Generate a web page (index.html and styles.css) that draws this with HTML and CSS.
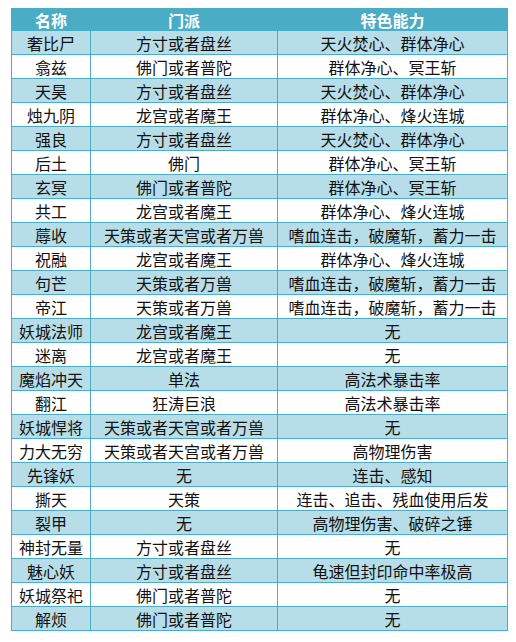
FILE: index.html
```html
<!DOCTYPE html>
<html lang="zh">
<head>
<meta charset="utf-8">
<link rel="stylesheet" href="styles.css">
</head>
<body>
<table class="grid">
<colgroup><col class="c1"><col class="c2"><col class="c3"></colgroup>
<thead>
<tr class="head"><th>名称</th><th>门派</th><th>特色能力</th></tr>
</thead>
<tbody>
<tr><td>奢比尸</td><td>方寸或者盘丝</td><td>天火焚心、群体净心</td></tr>
<tr><td>翕兹</td><td>佛门或者普陀</td><td>群体净心、冥王斩</td></tr>
<tr><td>天昊</td><td>方寸或者盘丝</td><td>天火焚心、群体净心</td></tr>
<tr><td>烛九阴</td><td>龙宫或者魔王</td><td>群体净心、烽火连城</td></tr>
<tr><td>强良</td><td>方寸或者盘丝</td><td>天火焚心、群体净心</td></tr>
<tr><td>后土</td><td>佛门</td><td>群体净心、冥王斩</td></tr>
<tr><td>玄冥</td><td>佛门或者普陀</td><td>群体净心、冥王斩</td></tr>
<tr><td>共工</td><td>龙宫或者魔王</td><td>群体净心、烽火连城</td></tr>
<tr><td>蓐收</td><td>天策或者天宫或者万兽</td><td>嗜血连击，破魔斩，蓄力一击</td></tr>
<tr><td>祝融</td><td>龙宫或者魔王</td><td>群体净心、烽火连城</td></tr>
<tr><td>句芒</td><td>天策或者万兽</td><td>嗜血连击，破魔斩，蓄力一击</td></tr>
<tr><td>帝江</td><td>天策或者万兽</td><td>嗜血连击，破魔斩，蓄力一击</td></tr>
<tr><td>妖城法师</td><td>龙宫或者魔王</td><td>无</td></tr>
<tr><td>迷离</td><td>龙宫或者魔王</td><td>无</td></tr>
<tr><td>魔焰冲天</td><td>单法</td><td>高法术暴击率</td></tr>
<tr><td>翻江</td><td>狂涛巨浪</td><td>高法术暴击率</td></tr>
<tr><td>妖城悍将</td><td>天策或者天宫或者万兽</td><td>无</td></tr>
<tr><td>力大无穷</td><td>天策或者天宫或者万兽</td><td>高物理伤害</td></tr>
<tr><td>先锋妖</td><td>无</td><td>连击、感知</td></tr>
<tr><td>撕天</td><td>天策</td><td>连击、追击、残血使用后发</td></tr>
<tr><td>裂甲</td><td>无</td><td>高物理伤害、破碎之锤</td></tr>
<tr><td>神封无量</td><td>方寸或者盘丝</td><td>无</td></tr>
<tr><td>魅心妖</td><td>方寸或者盘丝</td><td>龟速但封印命中率极高</td></tr>
<tr><td>妖城祭祀</td><td>佛门或者普陀</td><td>无</td></tr>
<tr><td>解烦</td><td>佛门或者普陀</td><td>无</td></tr>
</tbody>
</table>
</body>
</html>
```
FILE: styles.css
```css
html, body {
  margin: 0;
  padding: 0;
  background: #ffffff;
}
body {
  padding: 8px 0 0 11px;
  font-family: "Noto Sans CJK SC", "Noto Sans", sans-serif;
}
.grid {
  border-collapse: collapse;
  table-layout: fixed;
  width: 496px;
}
.c1 { width: 79px; }
.c2 { width: 187px; }
.c3 { width: 230px; }
.grid th, .grid td {
  border: 1px solid #4bacc6;
  padding: 0;
  text-align: center;
  vertical-align: middle;
  white-space: nowrap;
  overflow: hidden;
}
.grid th {
  background: #4bacc6;
  color: #ffffff;
  font-weight: bold;
  font-size: 16px;
  height: 21px;
  line-height: 20px;
}
.grid td {
  color: #111111;
  font-size: 16px;
  height: 23px;
  line-height: 22px;
}
.grid tbody tr:nth-child(odd) td {
  background: #b7dee8;
}
.grid tbody tr:nth-child(even) td {
  background: #ffffff;
}
```
